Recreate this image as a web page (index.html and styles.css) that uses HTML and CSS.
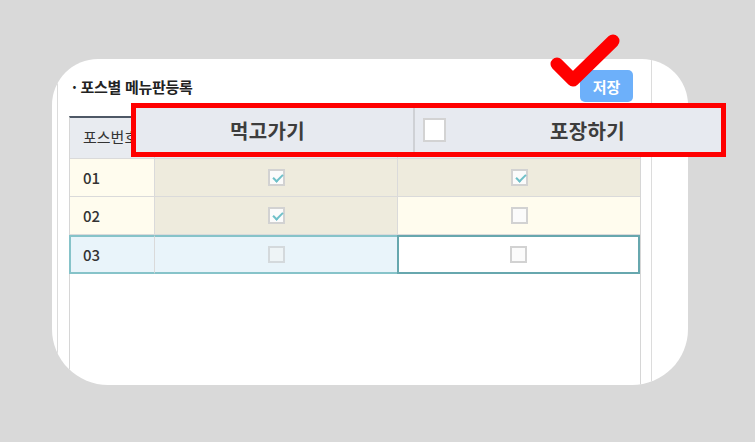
FILE: index.html
```html
<!DOCTYPE html>
<html lang="ko">
<head>
<meta charset="utf-8">
<link rel="stylesheet" href="styles.css">
</head>
<body>
<div class="card">
  <div class="panel">
    <div class="titlebar">
      <span class="title">· 포스별 메뉴판등록</span>
      <button class="save">저장</button>
    </div>
    <div class="grid">
      <div class="row head">
        <div class="cell c1"><span class="hc">포스번호</span></div>
        <div class="cell c2"></div>
        <div class="cell c3"></div>
      </div>
      <div class="row">
        <div class="cell c1 cream">01</div>
        <div class="cell c2 tan"><span class="cb on"></span></div>
        <div class="cell c3 tan"><span class="cb on"></span></div>
      </div>
      <div class="row">
        <div class="cell c1 cream">02</div>
        <div class="cell c2 tan"><span class="cb on"></span></div>
        <div class="cell c3 cream"><span class="cb"></span></div>
      </div>
      <div class="row sel">
        <div class="cell c1 blue">03</div>
        <div class="cell c2 blue"><span class="cb dim"></span></div>
        <div class="cell c3 focus"><span class="cb"></span></div>
      </div>
    </div>
  </div>
</div>

<div class="zoombox">
  <div class="zcol zleft"><span class="zlabel">먹고가기</span></div>
  <div class="zdiv"></div>
  <div class="zcol zright"><span class="zcb"></span><span class="zlabel zl2">포장하기</span></div>
</div>

<svg class="bigcheck" width="100" height="70" viewBox="0 0 100 70">
  <polyline points="17,39 33,55 73,16" fill="none" stroke="#ff0000" stroke-width="13" stroke-linecap="round" stroke-linejoin="round"/>
</svg>
</body>
</html>
```

FILE: styles.css
```css
* { box-sizing: border-box; }
html, body { margin: 0; padding: 0; }
body {
  background: #d9d9d9;
  width: 755px;
  height: 442px;
  overflow: hidden;
  font-family: "Noto Sans CJK KR", "Noto Sans", sans-serif;
  color: #333;
}
.card {
  margin: 59px 0 0 52px;
  width: 636px;
  height: 326px;
  background: #fff;
  border-radius: 46px 46px 56px 56px;
  overflow: hidden;
  display: flex;
  padding-left: 5px;
}
.panel {
  width: 595px;
  height: 100%;
  border-left: 1px solid #dcdcdc;
  border-right: 1px solid #dcdcdc;
  padding: 0 10px 0 11px;
  display: flex;
  flex-direction: column;
}
.titlebar {
  height: 57px;
  flex: none;
  display: flex;
  align-items: center;
  justify-content: space-between;
  padding: 11px 8px 14px 3px;
}
.title {
  font-size: 15px;
  font-weight: 700;
  color: #222;
  letter-spacing: -0.3px;
}
.save {
  width: 53px;
  height: 32px;
  border: 0;
  border-radius: 5px;
  background: #6db0fa;
  color: #fff;
  font-family: inherit;
  font-size: 15px;
  font-weight: 700;
  padding: 0;
}
.grid {
  flex: 1;
  border-left: 1px solid #d6d6d6;
  border-right: 1px solid #d6d6d6;
  border-top: 2px solid #4e5866;
  width: 572px;
}
.row {
  display: grid;
  grid-template-columns: 85px 243px 242px;
  height: 38px;
  border-bottom: 1px solid #dadada;
}
.row.head {
  height: 41px;
  background: #e8ebf0;
}
.cell {
  display: flex;
  align-items: center;
  justify-content: center;
  border-right: 1px solid #dadada;
  font-size: 15px;
}
.cell.c3 { border-right: 0; }
.cell.c1 {
  justify-content: flex-start;
  padding-left: 13px;
  font-weight: 500;
}
.head .c1 { padding-bottom: 3px; overflow: hidden; white-space: nowrap; }
.hc { font-size: 15px; font-weight: 400; }
.cream { background: #fffcee; }
.tan { background: #eeebdd; }
.blue { background: #e9f4fa; }
.row.sel {
  height: 39px;
  border-bottom: 0;
}
.row.sel .c1 { border-top: 2px solid #86c3c9; border-bottom: 2px solid #86c3c9; border-left: 2px solid #86c3c9; margin-left: -1px; padding-left: 12px; }
.row.sel .c2 { border-top: 2px solid #86c3c9; border-bottom: 2px solid #86c3c9; border-right: 1px solid #dadada; }
.focus {
  background: #fff;
  border: 2px solid #67a7ae !important;
  margin-left: -1px;
}
.cb {
  width: 17px;
  height: 17px;
  border: 2px solid #d2d2d2;
  background: #fbfbfb;
  position: relative;
}
.cb.dim { background: #eef4f6; border-color: #d4d9dc; }
.cb.on::after {
  content: "";
  position: absolute;
  left: 3px;
  top: 1px;
  width: 8px;
  height: 4px;
  border-left: 2px solid #6fc0c8;
  border-bottom: 2px solid #6fc0c8;
  transform: translate(0, 2px) rotate(-45deg);
}

.zoombox {
  position: absolute;
  left: 131px;
  top: 103px;
  width: 595px;
  height: 54px;
  border: 5px solid #ff0000;
  background: #e7eaf0;
  display: flex;
}
.zcol {
  display: flex;
  align-items: center;
}
.zleft {
  width: 277px;
  justify-content: center;
  padding-right: 14px;
}
.zdiv {
  width: 2px;
  background: #cfd1d5;
}
.zright {
  flex: 1;
  padding-left: 8px;
}
.zlabel {
  font-size: 20px;
  font-weight: 700;
  color: #3d3d3d;
  letter-spacing: 0.3px;
}
.zl2 { flex: 1; text-align: center; padding-left: 8px; }
.zcb {
  width: 23px;
  height: 24px;
  background: #fff;
  border: 2px solid #d3d3d3;
}
.bigcheck {
  position: absolute;
  left: 540px;
  top: 25px;
}
```
